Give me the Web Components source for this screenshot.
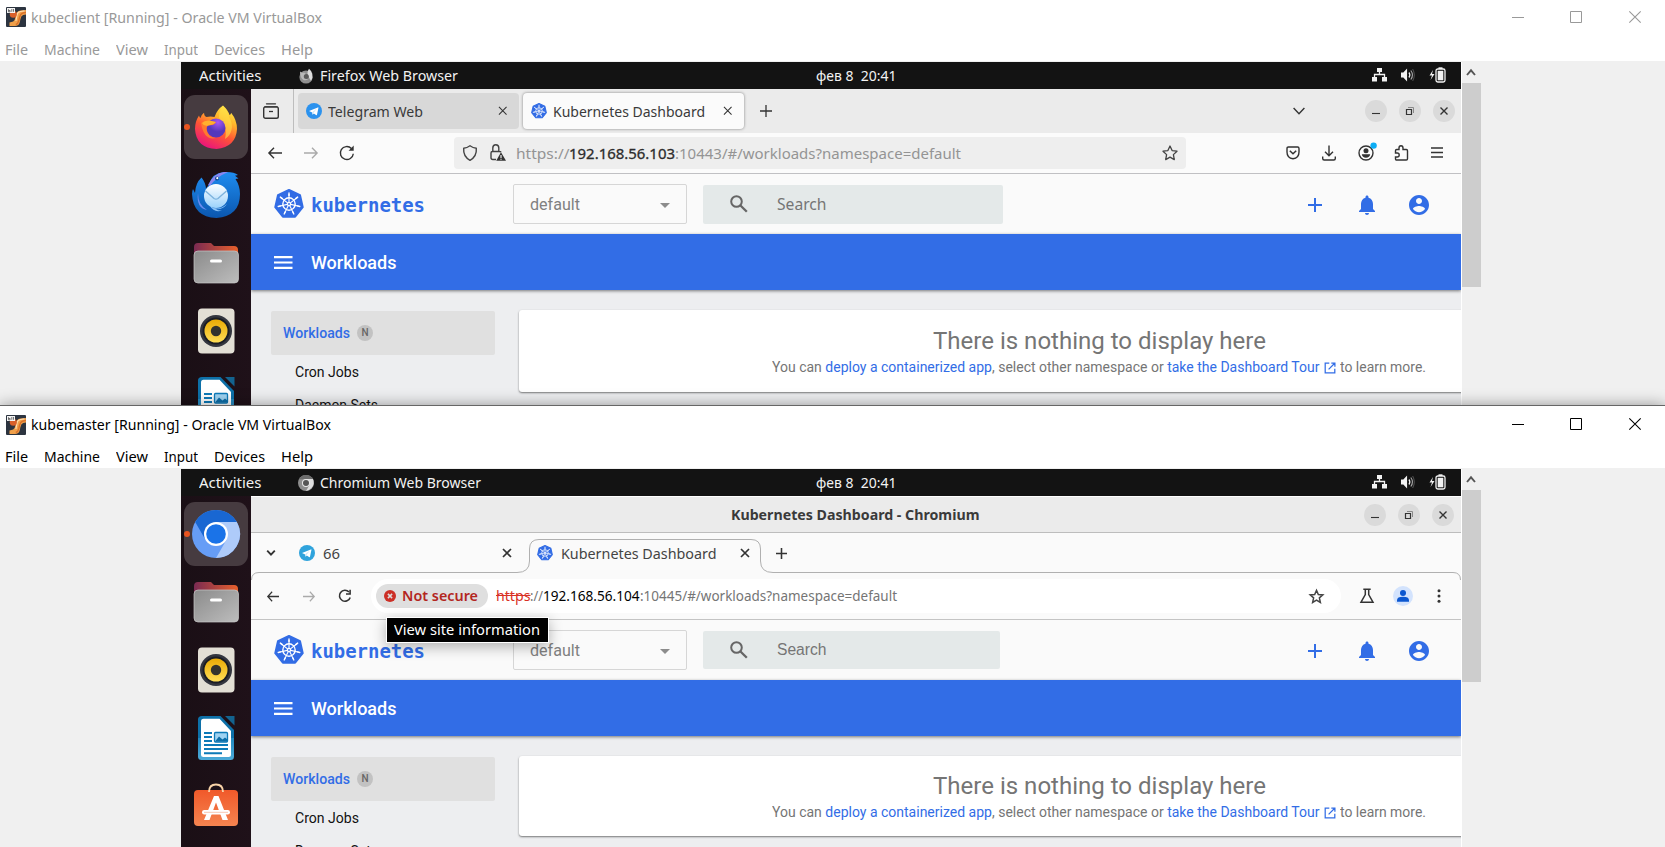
<!DOCTYPE html>
<html lang="en">
<head>
<meta charset="utf-8">
<title>Oracle VM VirtualBox</title>
<style>
html,body{margin:0;padding:0;height:847px;overflow:hidden;background:#f0f0f0}
body{display:flex;flex-direction:column;font-family:"Noto Sans","Open Sans",sans-serif}
</style>
</head>
<body>
<vm-window name="kubeclient" title-width="291" style="--h:405px;--title:34px;--menu:27px;--ink:#999;--thumb:204px;--deco:#999">
  <firefox-desktop></firefox-desktop>
</vm-window>
<vm-window name="kubemaster" title-width="300" active style="--h:441px;--title:37px;--menu:25px;--ink:#000;--thumb:192px;--deco:#000">
  <chromium-desktop></chromium-desktop>
</vm-window>

<script>
const poly=(n,r,cx,cy,rot=-90)=>Array.from({length:n},(_,i)=>{const a=(rot+i*360/n)*Math.PI/180;return (cx+r*Math.cos(a)).toFixed(2)+','+(cy+r*Math.sin(a)).toFixed(2)}).join(' ');
const spokes=Array.from({length:7},(_,i)=>`<g transform="rotate(${i*360/7} 16 16)"><path d="M16 14V5.2" stroke="#fff" stroke-width="1.2"/><path d="M16 4.2v2.6" stroke="#fff" stroke-width="1.5" stroke-linecap="round"/></g>`).join('');

const ICONS={
 vbox:['0 0 20 20',`<rect width="20" height="20" rx="1" fill="#2c3440"/><path d="M20 3v4.500q-3.500 0-4.500 1.700-1 2-1.600 5.500-.9 4.300-5 4.300H3.500v-3.500l3.700-1q1.600-.6 2-3.500L9.700 8Q10.500 4 14.500 3.400Z" fill="#f0a04a"/><path d="M20 5.500q-4 .3-5.300 2.200-1.200 2-1.900 6-.6 3-3 3.800" stroke="#d9702a" stroke-width="1.400" fill="none"/><path d="M18.500 3.900l-4 .6q-3 .6-3.500 3.500l-1.100 6" stroke="#ffdcae" stroke-width="1.200" fill="none"/><circle cx="7.300" cy="7.200" r="3.500" fill="#d9602a"/><rect x="1" y="1" width="8" height="5" fill="#f4f4f4"/><path d="M2.500 2.200v2.600h1.600V3.500H2.500M5.800 2v2.800M7.500 2v2.800" stroke="#555" stroke-width=".8" fill="none"/>`],
 k8s:['0 0 32 32',`<polygon points="${poly(7,15,16,16)}" fill="#326ce5" stroke="#326ce5" stroke-width="2.200" stroke-linejoin="round"/><circle cx="16" cy="16" r="6.600" fill="none" stroke="#fff" stroke-width="1.500"/>${spokes}<circle cx="16" cy="16" r="2.400" fill="#fff"/><circle cx="16" cy="16" r="1" fill="#326ce5"/>`],
 telegram:['0 0 16 16',`<circle cx="8" cy="8" r="8" fill="var(--tg,#2b92ee)"/><path d="M3 7.900l8.800-3.500q.8-.2.600.7l-1.400 6.700q-.2.800-1 .3L7.800 10.500l-1.300 1.200-.3-2.100Z" fill="#fff"/><path d="M6.200 9.500l4.500-3.800-3.500 4.400Z" fill="#b9dcf5"/>`],
 min:['0 0 12 12','<path d="M0 6.500h12" stroke="var(--deco)"/>'],
 max:['0 0 12 12','<path d="M.5.5h11v11H.5z" stroke="var(--deco)" fill="none"/>'],
 close:['0 0 12 12','<path d="M.3.300l11.400 11.400M11.700.3L.3 11.700" stroke="var(--deco)" stroke-width="1.100"/>'],
 up:['0 0 10 8','<path d="M1 7l4-4.700L9 7" fill="none" stroke="#555" stroke-width="1.900"/>'],
 ffgrey:['0 0 16 16',`<circle cx="8" cy="9" r="6.600" fill="#8f8f8f"/><path d="M11 .8q2.500 2 3.300 5 .8 4-1.300 7Q10 9 9.500 5.500 9.600 2.500 11 .8Z" fill="#ddd"/><path d="M2 3.500l2 1.200h2.500L9 7 6.500 8.500Q8 11.500 11 10 9 13 5.500 12 2 10 2 3.500Z" fill="#b8b8b8"/><circle cx="8.300" cy="8.600" r="2.500" fill="#5a5a5a"/>`],
 crgrey:['0 0 16 16',`<circle cx="8" cy="8" r="8" fill="#8e8e8e"/><path d="M8 4h7q2 5-1.500 9-2.500 2.500-5.500 2.900L11.500 10Z" fill="#ddd"/><path d="M1 4.200A8 8 0 0 1 15 4H8Z" fill="#6c6c6c"/><circle cx="8" cy="8" r="4" fill="#e9e9e9"/><circle cx="8" cy="8" r="3" fill="#555"/>`],
 net:['0 0 15 14','<path d="M5 0h5v4H5zM0 9h5v4.500H0zM10 9h5v4.500h-5z" fill="#f2f2f2"/><path d="M7.500 4v2.500M2.500 9V6.500h10V9" fill="none" stroke="#f2f2f2" stroke-width="1.300"/>'],
 vol:['0 0 15 14','<path d="M0 4.500h2.500L6.500.5v13l-4-4H0z" fill="#f2f2f2"/><path d="M8.500 4.500q2 2.500 0 5" stroke="#f2f2f2" stroke-width="1.300" fill="none"/><path d="M10.500 2.500q3.500 4.500 0 9" stroke="#aaa" stroke-width="1.200" fill="none"/><path d="M12.500 1q3.500 6 0 12" stroke="#555" stroke-width="1" fill="none"/>'],
 bat:['0 0 17 16','<path d="M4 3L.5 8.500H3L1.500 13 5.500 7H3z" fill="#f2f2f2"/><rect x="7" y="2" width="9" height="13" rx="1.800" fill="none" stroke="#f2f2f2" stroke-width="1.300"/><path d="M9.500.3h4v1.700h-4z" fill="#f2f2f2"/><rect x="8.700" y="3.800" width="5.600" height="9.500" fill="#f2f2f2"/>'],
 view:['0 0 16 16','<path d="M3.500.8h9M1.800 3.800h12.400" stroke="#333" stroke-width="1.300" stroke-linecap="round"/><rect x=".7" y="3.900" width="14.600" height="11.300" rx="1.800" fill="none" stroke="#333" stroke-width="1.400"/><path d="M6 8.500h4" stroke="#333" stroke-width="1.300"/>'],
 x:['0 0 10 10','<path d="M1 1l8 8M9 1L1 9" stroke="#333" stroke-width="var(--xw,1.100)"/>'],
 plus:['0 0 12 12','<path d="M6 0v12M0 6h12" stroke="#333" stroke-width="var(--xw,1.300)"/>'],
 chev:['0 0 12 8','<path d="M.6 1L6 6.700 11.400 1" stroke="#333" stroke-width="1.400" fill="none"/>'],
 chevb:['0 0 10 8','<path d="M1.200 1.700L5 5.600l3.800-3.900" stroke="#333" stroke-width="1.900" fill="none"/>'],
 back:['0 0 14 12','<path d="M14 6H1M6 .8L.9 6 6 11.200" stroke="#333" stroke-width="1.400" fill="none"/>'],
 fwd:['0 0 14 12','<path d="M0 6h13M8 .8L13.100 6 8 11.200" stroke="#aaa" stroke-width="1.400" fill="none"/>'],
 reload:['0 0 16 16','<path d="M14.300 8.700A6.500 6.500 0 1 1 12.400 3.400" stroke="#333" stroke-width="1.400" fill="none"/><path d="M14.700.6v5.100H9.600Z" fill="#333"/>'],
 creload:['0 0 14 14','<path d="M12.200 8.400A5.500 5.500 0 1 1 11 3" stroke="#333" stroke-width="1.600" fill="none"/><path d="M12.900.8v5H8V4.200h3.300V.8z" fill="#333"/>'],
 shield:['0 0 16 16','<path d="M8 .8q3 2.200 6.300 2.500Q15 11.500 8 15.300 1 11.500 1.700 3.300 5 3 8 .8Z" stroke="#444" stroke-width="1.400" fill="none" stroke-linejoin="round"/>'],
 lock:['0 0 16 17','<path d="M6 15.500H2.800Q1 15.500 1 13.700V9Q1 7.500 2.500 7.500h7q1.200 0 1.500.8M2.800 7.500V4q0-3.200 3-3.200t3 3.200v3.500" stroke="#444" stroke-width="1.400" fill="none"/><path d="M11 8.300l5 8.500H6.200z" fill="#333"/><path d="M11 11v3M11 14.800v1" stroke="#fff" stroke-width="1.100"/>'],
 star:['0 0 16 16',`<path d="M8 1l2.100 4.600 4.900.6-3.600 3.400.9 5L8 12.100l-4.300 2.500.9-5L1 6.200l4.900-.6Z" stroke="#444" stroke-width="1.300" fill="none" stroke-linejoin="round"/>`],
 cstar:['0 0 14 14',`<path d="M7 1.200l1.700 3.900 4.200.4-3.200 2.800.9 4.200L7 10.300l-3.600 2.200.9-4.200L1.100 5.500l4.200-.4Z" stroke="#444" stroke-width="1.400" fill="none"/>`],
 pocket:['0 0 14 14','<path d="M2.400 1h9.200Q13 1 13 2.400V6q0 6-6 6.800Q1 12 1 6V2.400Q1 1 2.400 1Z" stroke="#333" stroke-width="1.400" fill="none"/><path d="M3.800 4.700L7 7.800l3.200-3.100" stroke="#333" stroke-width="1.500" fill="none"/>'],
 dl:['0 0 14 16','<path d="M7 .5v10M3 6.800l4 4 4-4M.7 11.500v2q0 1.500 1.500 1.500h9.600q1.500 0 1.500-1.500v-2" stroke="#333" stroke-width="1.400" fill="none"/>'],
 acct:['0 0 20 20','<circle cx="9" cy="11" r="7" stroke="#333" stroke-width="1.400" fill="none"/><circle cx="9" cy="8.800" r="2.500" fill="#333"/><path d="M4.800 12.200h8.400q-.5 3.400-4.200 3.600-3.700-.2-4.200-3.600Z" fill="#333"/><circle cx="16.600" cy="3.600" r="3.200" fill="#0cadf5"/>'],
 puzzle:['0 0 16 16','<path d="M5 4.500V3q0-2.300 2-2.300T9 3v1.500h3.300q1.200 0 1.200 1.200v8.100q0 1.200-1.200 1.200H2.700q-1.200 0-1.200-1.200V12h1.700q2 0 2-2t-2-2H1.500V5.700q0-1.200 1.200-1.200Z" stroke="#333" stroke-width="1.400" fill="none"/>'],
 ham:['0 0 12 11','<path d="M0 1h12M0 5.500h12M0 10h12" stroke="#333" stroke-width="1.300"/>'],
 mag:['0 0 18 18','<circle cx="6.500" cy="6.500" r="5.300" stroke="#666" stroke-width="2" fill="none"/><path d="M10.500 10.500l6.300 6.300" stroke="#666" stroke-width="2.300"/>'],
 drop:['0 0 10 5','<path d="M0 0h10L5 5z" fill="#8c8c8c"/>'],
 add:['0 0 14 14','<path d="M7 0v14M0 7h14" stroke="#326de6" stroke-width="2"/>'],
 bell:['0 0 24 24','<path d="M12 22c1.100 0 2-.9 2-2h-4c0 1.100.9 2 2 2zm6-6v-5c0-3.070-1.640-5.640-4.500-6.320V4c0-.83-.67-1.500-1.500-1.500s-1.500.67-1.500 1.500v.68C7.630 5.360 6 7.920 6 11v5l-2 2v1h16v-1l-2-2z" fill="#326de6"/>'],
 user:['0 0 24 24','<path d="M12 2C6.480 2 2 6.480 2 12s4.480 10 10 10 10-4.480 10-10S17.520 2 12 2zm0 3c1.660 0 3 1.340 3 3s-1.340 3-3 3-3-1.340-3-3 1.340-3 3-3zm0 14.200c-2.500 0-4.710-1.280-6-3.220.030-1.990 4-3.080 6-3.080 1.990 0 5.970 1.090 6 3.080-1.290 1.940-3.500 3.220-6 3.220z" fill="#326de6"/>'],
 burger:['0 0 18 12','<path d="M0 1h18M0 6h18M0 11h18" stroke="#fff" stroke-width="2"/>'],
 ext:['0 0 12 12','<path d="M5.300 1.200H1.200v9.600h9.600V6.700M7.300 1.100h3.600v3.600M10.700 1.300L4.600 7.400" stroke="#326de6" stroke-width="1.250" fill="none"/>'],
 bad:['0 0 12 12','<circle cx="6" cy="6" r="6" fill="#cc2f26"/><path d="M3.900 3.900l4.200 4.200M8.100 3.900L3.900 8.100" stroke="#ddd" stroke-width="1.500"/>'],
 flask:['0 0 14 16','<path d="M3.300 1.200h7.400M5.300 1v5.600L1 14.200h12L8.700 6.600V1" stroke="#333" stroke-width="1.500" fill="none"/>'],
 prof:['0 0 20 20','<circle cx="10" cy="10" r="10" fill="#d3e3fd"/><circle cx="10" cy="7" r="3" fill="#0b57d0"/><path d="M4 15.800v-1.600q0-3.400 6-3.400t6 3.400v1.600z" fill="#0b57d0"/>'],
 kebab:['0 0 4 14','<circle cx="2" cy="1.700" r="1.500" fill="#333"/><circle cx="2" cy="7" r="1.500" fill="#333"/><circle cx="2" cy="12.300" r="1.500" fill="#333"/>'],
 wmin:['0 0 22 22','<circle cx="11" cy="11" r="11" fill="#dadada"/><path d="M7 13.500h8" stroke="#333" stroke-width="1.100"/>'],
 wmax:['0 0 22 22','<circle cx="11" cy="11" r="11" fill="#dadada"/><path d="M7.500 9.500h5v5h-5z" stroke="#333" fill="none" stroke-width="1.200"/><path d="M9 7.500h5.500V13" stroke="#888" fill="none"/>'],
 wx:['0 0 22 22','<circle cx="11" cy="11" r="11" fill="#dadada"/><path d="M7.500 7.500l7 7M14.500 7.500l-7 7" stroke="#333" stroke-width="1.400"/>'],
 firefox:['0 0 48 48',`<defs><linearGradient id="a" x1=".8" y1="0" x2=".3" y2="1"><stop offset="0" stop-color="#fff04a"/><stop offset=".3" stop-color="#ffb52a"/><stop offset=".6" stop-color="#ff5634"/><stop offset="1" stop-color="#e8127f"/></linearGradient><radialGradient id="b" cx=".6" cy=".2"><stop offset="0" stop-color="#a856f5"/><stop offset="1" stop-color="#5538bb"/></radialGradient></defs><path d="M31 2.500q5 4.500 6.500 9.500 1.500-.3 1.600-2.300Q45 17 45 26q-1 18-20.500 20Q4 45 3 26q0-7.500 4-13.500.5 2 1.500 2.500 1-3.500 3.500-5.200.3 3.700 2.500 4.200 4-1 8 0 2.500-7.500 8.500-11.500Z" fill="url(#a)"/><path d="M31 3q5 5 6 11 4 6 2.500 13-1.500 6-6.500 9 2-9-1-15-4-4-5-6.500Q27 7 31 3Z" fill="#ffe04a" opacity=".6"/><circle cx="24" cy="25" r="9.500" fill="url(#b)"/><path d="M9 20q5-4 9.500-1.500l5.500.5q-2 3.500-6 3.300-4 .2-3.500 4.200 1.500 8 9.500 8.500Q12 38 9 20Z" fill="#ff7a2e"/><path d="M10 20q4-4.500 14-1-3 3.500-7 3.300Q12 24 10 20Z" fill="#ffb02e"/>`],
 thunder:['0 0 48 48',`<defs><linearGradient id="a" x1="0" y1="0" x2="0" y2="1"><stop offset="0" stop-color="#1f8df0"/><stop offset="1" stop-color="#0b56ae"/></linearGradient><linearGradient id="b" x1="0" y1="0" x2="0" y2="1"><stop offset="0" stop-color="#fff"/><stop offset="1" stop-color="#9bd2fb"/></linearGradient></defs><path d="M9.500 6.500q4 5 4.500 11l3-4Q20 2 32 1q10-.5 14 3l-3 .8 3.500 2.700-3 .5Q48 15 48 23q0 22-23.500 24Q1 46 0 23q0-3 1-5l2 4Q3.500 12 9.500 6.500Z" fill="url(#a)"/><path d="M6 22q0 12 9 17Q4 37 6 22Z" fill="#6c8cf0"/><path d="M16 14Q22 2 32 1h4Q24 6 18 15Z" fill="#8a86f0"/><circle cx="25" cy="7.500" r="1.900" fill="#0a3f86"/><circle cx="25.300" cy="7.200" r="1.100" fill="#fff"/><circle cx="24" cy="25" r="12" fill="url(#b)"/><path d="M18 35q8 6 17-2-4 6-11 5 2 2 6 1.500Q22 42 18 35Z" fill="#8cc4f8"/><path d="M13.500 20l8.500 7.500q2 1.300 4 0l8.500-7.500" stroke="#7cb2dd" stroke-width="1.400" fill="none"/>`],
 files:['0 0 48 48',`<defs><linearGradient id="a"><stop offset="0" stop-color="#7a2a52"/><stop offset="1" stop-color="#e8602c"/></linearGradient><linearGradient id="b" x1="0" y1="0" x2="1" y2="1"><stop offset="0" stop-color="#8b8b8b"/><stop offset="1" stop-color="#bdbdbd"/></linearGradient></defs><path d="M2 8q0-4 4-4h13l3 3h20q4 0 4 4v10H2Z" fill="url(#a)"/><rect x="2" y="12" width="44.500" height="32" rx="4" fill="url(#b)" stroke="#c8c8c8" stroke-width=".7"/><rect x="18" y="20.500" width="12" height="3" rx="1.500" fill="#fff"/>`],
 rhythm:['0 0 48 48',`<defs><linearGradient id="a" x1="0" y1="0" x2="0" y2="1"><stop offset="0" stop-color="#e9aa05"/><stop offset="1" stop-color="#ffdd55"/></linearGradient></defs><rect x="6" y="1.500" width="36.500" height="45" rx="4" fill="#e3dfd5"/><circle cx="24" cy="24" r="16" fill="#34363f"/><circle cx="24" cy="24" r="13.500" fill="#1b1d24"/><circle cx="24" cy="24" r="11.500" fill="url(#a)"/><circle cx="24" cy="24" r="5.200" fill="#33332e"/>`],
 writer:['0 0 48 48',`<defs><linearGradient id="a" x1="0" y1="0" x2="0" y2="1"><stop offset="0" stop-color="#0d70a8"/><stop offset=".5" stop-color="#0d70a8"/><stop offset=".51" stop-color="#2288bf"/><stop offset="1" stop-color="#4caad8"/></linearGradient></defs><path d="M10 2h18.500L42 16v26.500q0 3.500-3.500 3.500H9.500Q6 46 6 42.500V5.500Q6 2 10 2Z" fill="url(#a)"/><path d="M33 2h9.500v9.500Z" fill="#13638f"/><path d="M11.500 4.800H27.500L39 17v23.500q0 2.500-2.500 2.500h-25Q9 43 9 40.500v-33q0-2.700 2.500-2.700Z" fill="#fff"/><path d="M12 19h8M12 23h8M12 27h8M12 31h24M12 35h24M12 39.300h18" stroke="#0d7ab8" stroke-width="2"/><rect x="22.500" y="18.500" width="13" height="9.500" rx="1" fill="#9fd3f2" stroke="#0d7ab8" stroke-width="1.300"/><path d="M23 27.500l4-5 3.500 3 2.500-2 2.500 2v2Z" fill="#0d6ea8"/>`],
 soft:['0 0 48 48',`<defs><linearGradient id="a" x1="0" y1="0" x2="0" y2="1"><stop offset="0" stop-color="#f0592a"/><stop offset="1" stop-color="#f58450"/></linearGradient></defs><rect x="2" y="8" width="44" height="36" rx="4" fill="url(#a)"/><path d="M17 10q0-7.500 7-7.500t7 7.500" stroke="#f8d3a8" stroke-width="1.800" fill="none"/><path d="M22 14h4.500l9.500 24h-5.500L24 20.500 17.500 38H12Z" fill="#fff"/><rect x="10" y="28" width="28" height="4.500" rx="2.200" fill="#fff"/><path d="M12 30.300h24" stroke="#f0a080" stroke-width=".6"/>`],
 chromium:['0 0 48 48',`<circle cx="24" cy="24" r="24" fill="#669df6"/><path d="M24 12h20.800A24 24 0 0 1 24 48L34.400 30Z" fill="#aecbfa"/><path d="M3.200 12A24 24 0 0 1 44.800 12H24L13.600 30Z" fill="#1967d2"/><circle cx="24" cy="24" r="12" fill="#fff"/><circle cx="24" cy="24" r="9.800" fill="#1a73e8"/>`]
};

const define=(tag,css,html)=>customElements.define(tag,class extends HTMLElement{
  connectedCallback(){ if(this.shadowRoot)return;
    const t=document.createElement('template');
    t.innerHTML=`<style>*{box-sizing:border-box}${css}</style>`+(typeof html==='function'?html(this):html);
    this.attachShadow({mode:'open'}).appendChild(t.content.cloneNode(true)); }
});

/* n = icon name, w/h = drawn size in px */
define('ui-icon',':host{display:block;flex:none}svg{display:block;width:100%;height:100%;overflow:visible}',el=>{
  const [vb,body]=ICONS[el.getAttribute('n')];
  el.style.width=el.getAttribute('w')+'px'; el.style.height=(el.getAttribute('h')||el.getAttribute('w'))+'px';
  return `<svg viewBox="${vb}" preserveAspectRatio="none">${body}</svg>`;});

define('vm-window',`
:host{display:flex;flex-direction:column;flex:none;position:relative;height:var(--h);background:#fff}
:host([active]){border-top:1px solid #666;height:calc(var(--h) + 1px);box-shadow:0 0 14px rgba(0,0,0,.38);z-index:1}
.title{height:var(--title);display:flex;align-items:center;padding-left:6px;font-size:15px;color:var(--ink)}
.title fit-text{margin:0 0 1px 5px}
:host([active]) .title fit-text{margin-bottom:2px}
.ctl{margin-left:auto;display:flex;gap:46px 46px;padding-right:24px;align-items:center;margin-top:-1px}
:host([active]) .ctl{margin-top:-2px}
.ctl ui-icon:last-child{margin-left:1px}
.menu{height:var(--menu);display:flex;gap:16px;padding-left:5px;align-items:center;font-size:14.500px;color:var(--ink)}
.menu fit-text{margin-top:3px}
:host([active]) .menu fit-text{margin-top:1px}
.stage{flex:1;min-height:0;background:#f0f0f0;display:flex;padding:1px 0 0 181px;overflow:hidden}
.screen{width:1280px;flex:none;overflow:hidden}
.sb{width:20px;margin-left:0;border-left:1px solid #fff;background:#f0f0f0;display:flex;flex-direction:column}
.sb ui-icon{margin:6px auto 7px 4px}.thumb{height:var(--thumb);background:#cdcdcd}`,
el=>`<div class="title"><ui-icon n="vbox" w="20"></ui-icon><fit-text w="${el.getAttribute('title-width')}">${el.getAttribute('name')} [Running] - Oracle VM VirtualBox</fit-text>
<div class="ctl"><ui-icon n="min" w="12"></ui-icon><ui-icon n="max" w="12"></ui-icon><ui-icon n="close" w="12"></ui-icon></div></div>
<div class="menu"><fit-text w="23">File</fit-text><fit-text w="56">Machine</fit-text><fit-text w="32">View</fit-text><fit-text w="34">Input</fit-text><fit-text w="51">Devices</fit-text><fit-text w="32">Help</fit-text></div>
<div class="stage"><div class="screen"><slot></slot></div><div class="sb"><ui-icon n="up" w="10" h="8"></ui-icon><div class="thumb"></div></div></div>`);

define('gnome-bar',`
:host{display:grid;grid-template-columns:117px 518px 1fr auto;align-items:center;height:27px;background:#131313;color:#f2f2f2;font-size:14.300px}
fit-text{margin-bottom:1px}
.act{padding-left:18px}.app{display:flex;align-items:center;gap:6px}
.tray{display:flex;gap:14px;padding-right:15px;align-items:center;margin-bottom:1px}`,
el=>`<div class="act"><fit-text w="62.500">Activities</fit-text></div>
<div class="app"><ui-icon n="${el.getAttribute('icon')}" w="16"></ui-icon><fit-text w="${el.getAttribute('w')}">${el.getAttribute('app')}</fit-text></div>
<fit-text w="80.500">фев 8&nbsp; 20:41</fit-text>
<div class="tray"><ui-icon n="net" w="15" h="14"></ui-icon><ui-icon n="vol" w="14" h="14"></ui-icon><ui-icon n="bat" w="17" h="16"></ui-icon></div>`);

define('gnome-dock',`
:host{display:flex;flex-direction:column;gap:4px;width:70px;flex:none;padding:6px 3px;background:linear-gradient(90deg,#1a0f15,#1f1119)}
.cell{width:64px;height:64px;flex:none;display:grid;place-items:center;border-radius:11px;position:relative}
.cell.on{background:#463b40}
.cell.on::before{content:"";position:absolute;left:0;top:29px;width:6px;height:6px;border-radius:50%;background:#e95420}`,
el=>el.getAttribute('apps').split(' ').map((a,i)=>`<div class="cell${i?'':' on'}"><ui-icon n="${a}" w="48"></ui-icon></div>`).join(''));

/* Kubernetes Dashboard page */
define('kube-page',`
:host{display:block;background:#edeef0;font-family:Roboto,sans-serif;height:400px}
.head{height:60px;background:#fafafa;display:flex;align-items:center;padding-left:23px}
.word{margin:1px 0 0 7px;font:bold 19px "DejaVu Sans Mono",monospace;color:#326de6}
.sel{margin-left:88px;width:174px;height:40px;border:1px solid #d6d6d6;border-radius:2px;display:flex;align-items:center;padding:0 16px;font-size:16px;color:#808080;justify-content:space-between}
.sel ui-icon{margin-top:2px}
.search{margin-left:16px;width:var(--sw);height:var(--sh);background:#e4e9e9;border-radius:2px;display:flex;align-items:center;padding-left:27px;font:var(--sf);color:#757575}
.search ui-icon{margin-bottom:1px}
.search fit-text{margin-left:29px}
.acts{margin:1px 0 0 auto;display:flex;align-items:center;padding-right:30px}
.blue{height:56px;background:#326de6;display:flex;align-items:center;padding-left:23px;color:#fff;font-size:18px;font-weight:500;box-shadow:0 1px 3px rgba(0,0,0,.5);position:relative}
.blue fit-text{margin-left:18.500px}
.body{display:grid;grid-template-columns:224px 1160px;gap:24px;padding:20px 0 0 20px}
.item{margin-top:1px;height:44px;background:#e0e0e0;border-radius:2px;display:flex;align-items:center;padding-left:12px;font-size:14px;font-weight:500;color:#326de6}
.n{margin-left:7px;width:16px;height:16px;border-radius:50%;background:#c2c2c2;color:#666;font-size:10px;line-height:16px;text-align:center}
.sub{height:33px;display:flex;align-items:center;padding-left:24px;font-size:14px;color:#111}
.card{height:var(--ch,82px);background:#fff;border-radius:3px;box-shadow:0 1px 2px rgba(0,0,0,.5);color:#757575;display:flex;flex-direction:column;align-items:center;padding-top:var(--cp,17px)}
.card .t{font-size:24px;line-height:28px}.card .s{font-size:14px;line-height:20px;margin-top:2px;display:flex;align-items:center;white-space:pre}
.s b{font-weight:400;color:#326de6}`,
`<div class="head"><ui-icon n="k8s" w="30"></ui-icon><fit-text class="word" w="114">kubernetes</fit-text>
<div class="sel"><fit-text w="50">default</fit-text><ui-icon n="drop" w="10" h="5"></ui-icon></div>
<div class="search"><ui-icon n="mag" w="18"></ui-icon><fit-text w="49.500">Search</fit-text></div>
<div class="acts"><ui-icon n="add" w="14"></ui-icon><ui-icon n="bell" w="24" style="margin-left:33px"></ui-icon><ui-icon n="user" w="24" style="margin-left:28px"></ui-icon></div></div>
<div class="blue"><ui-icon n="burger" w="18.500" h="13"></ui-icon><fit-text w="85.500">Workloads</fit-text></div>
<div class="body"><div><div class="item"><fit-text w="67">Workloads</fit-text><span class="n">N</span></div>
<div class="sub"><fit-text w="64">Cron Jobs</fit-text></div><div class="sub"><fit-text w="83">Daemon Sets</fit-text></div></div>
<div class="card"><fit-text class="t" w="333">There is nothing to display here</fit-text>
<div class="s"><fit-text w="547.500">You can <b>deploy a containerized app</b>, select other namespace or <b>take the Dashboard Tour</b></fit-text><ui-icon n="ext" w="12" style="margin:1px 4px 0 4.500px"></ui-icon><fit-text w="86">to learn more.</fit-text></div></div></div>`);

define('firefox-desktop',`
:host{display:block}.row{display:flex;height:420px}.win{flex:1;min-width:0;overflow:hidden;background:#fbfbfb}
.tabs{height:44px;background:#ebebeb;display:flex;align-items:center;padding-left:12px;font-size:14.500px;color:#3a3a3a}
.sep{width:1px;height:44px;background:#bdbdbd;margin:0 4px 0 14px}
.tab{width:221px;height:36px;border-radius:4px;background:#d8d8d8;display:flex;align-items:center;padding:0 12px 0 8px;gap:6px}
.tab.on{background:#fbfbfb;box-shadow:0 0 3px rgba(0,0,0,.45);margin-left:4px}.tab ui-icon:last-child{margin-left:auto}
.btns{display:flex;gap:12px;margin-left:auto;padding-right:6px}
.nav{height:41px;border-bottom:1px solid #c0c0c3;display:flex;align-items:center;padding-left:17px}
.url{margin-left:99px;width:732px;height:32px;border-radius:4px;background:#eee;display:flex;align-items:center;padding:0 8px;font-size:14.700px;color:#949494}
.d{color:#2c2c2c;-webkit-text-stroke:.3px #2c2c2c}
.tools{display:flex;align-items:center;margin-left:auto;padding-right:18px}
kube-page{--sw:300px;--sh:39px;--sf:400 15.700px "Noto Sans",sans-serif}`,
`<gnome-bar app="Firefox Web Browser" icon="ffgrey" w="138"></gnome-bar>
<div class="row"><gnome-dock apps="firefox thunder files rhythm writer"></gnome-dock>
<div class="win"><div class="tabs"><ui-icon n="view" w="16"></ui-icon><div class="sep"></div>
<div class="tab"><ui-icon n="telegram" w="16"></ui-icon><fit-text w="95">Telegram Web</fit-text><ui-icon n="x" w="9.500"></ui-icon></div>
<div class="tab on"><ui-icon n="k8s" w="16"></ui-icon><fit-text w="152">Kubernetes Dashboard</fit-text><ui-icon n="x" w="9.500"></ui-icon></div>
<ui-icon n="plus" w="12" style="margin-left:15.500px"></ui-icon><ui-icon n="chev" w="12" h="8" style="margin-left:521.500px"></ui-icon>
<div class="btns"><ui-icon n="wmin" w="22"></ui-icon><ui-icon n="wmax" w="22"></ui-icon><ui-icon n="wx" w="22"></ui-icon></div></div>
<div class="nav"><ui-icon n="back" w="14" h="12"></ui-icon><ui-icon n="fwd" w="14" h="12" style="margin-left:22px"></ui-icon><ui-icon n="reload" w="16" style="margin-left:21px"></ui-icon>
<div class="url"><ui-icon n="shield" w="16"></ui-icon><ui-icon n="lock" w="16" h="17" style="margin:-1px 0 0 12px"></ui-icon>
<fit-text w="53.500" style="margin-left:9.500px">https://</fit-text><fit-text class="d" w="106">192.168.56.103</fit-text><fit-text w="286">:10443/#/workloads?namespace=default</fit-text>
<ui-icon n="star" w="16" style="margin-left:auto"></ui-icon></div>
<div class="tools"><ui-icon n="pocket" w="14"></ui-icon><ui-icon n="dl" w="14" h="16" style="margin:-1px 0 0 21.500px"></ui-icon><ui-icon n="acct" w="20" style="margin:-2px 0 0 21px"></ui-icon><ui-icon n="puzzle" w="16" style="margin-left:17px"></ui-icon><ui-icon n="ham" w="12" h="11" style="margin:-1px 0 0 21.500px"></ui-icon></div></div>
<kube-page></kube-page></div></div>`);

define('chromium-desktop',`
:host{display:block}.row{display:flex;height:420px}.win{flex:1;min-width:0;overflow:hidden;background:#fafafa;position:relative}
.bar{height:37px;border-top:1px solid #fff;border-bottom:1px solid #bdbdbd;background:#ebebeb;display:flex;align-items:center;padding:0 7px 0 480px;font-size:14.300px;font-weight:700;color:#3a3a3a}
.btns{display:flex;gap:12px;margin-left:auto}
.tabs{height:40px;display:flex;align-items:center;padding-left:15px;font-size:14.500px;color:#444;position:relative;--xw:1.700;--tg:#2fa3dc}
.tabs fit-text,.omni fit-text{margin-bottom:1px}
.line{position:absolute;left:0;top:0;width:1210px;height:50px;pointer-events:none}
.nav{height:47px;border-bottom:1px solid #c4c4c4;display:flex;align-items:center;padding-left:16px}
.omni{margin-left:19px;width:970px;height:34px;border-radius:17px;background:#fff;display:flex;align-items:center;padding:0 17px 0 5px;font-size:14.300px;color:#757575}
.chip{width:112px;height:24px;border-radius:12px;background:#dfdfdf;display:flex;align-items:center;padding-left:8px;gap:6px;color:#b3261e;font-weight:600;margin-right:7.500px}
.k{color:#000}.r{color:#d93025;text-decoration:line-through}
.tools{display:flex;align-items:center;margin-left:auto;padding-right:20px}
.tip{position:absolute;left:135px;top:121px;width:163px;height:26px;background:#000;border:1px solid #fff;box-shadow:0 4px 14px rgba(0,0,0,.3);color:#fff;display:flex;align-items:center;padding:0 0 2px 7px;font-size:14.300px}
kube-page{--sw:297px;--sh:38px;--sf:400 16px "Liberation Sans",sans-serif;--ch:80px;--cp:16px}`,
`<gnome-bar app="Chromium Web Browser" icon="crgrey" w="161"></gnome-bar>
<div class="row"><gnome-dock apps="chromium files rhythm writer soft"></gnome-dock>
<div class="win"><div class="bar"><fit-text w="248.500">Kubernetes Dashboard - Chromium</fit-text><div class="btns"><ui-icon n="wmin" w="22"></ui-icon><ui-icon n="wmax" w="22"></ui-icon><ui-icon n="wx" w="22"></ui-icon></div></div>
<div class="tabs"><svg class="line" viewBox="0 0 1210 50"><path d="M.5 47Q.5 39.500 8 39.500H266Q278.500 39.500 278.500 28V16Q278.500 6.500 288 6.500H500Q509.500 6.500 509.500 16V28Q509.500 39.500 522 39.500H1202Q1209.500 39.500 1209.500 47" fill="none" stroke="#b0b0b0"/></svg>
<ui-icon n="chevb" w="10" h="8"></ui-icon><ui-icon n="telegram" w="16" style="margin-left:23px"></ui-icon><fit-text w="17" style="margin-left:8px">66</fit-text>
<ui-icon n="x" w="10" style="margin-left:162px"></ui-icon><ui-icon n="k8s" w="16" style="margin-left:25px"></ui-icon><fit-text w="155.500" style="margin-left:8px">Kubernetes Dashboard</fit-text>
<ui-icon n="x" w="10" style="margin-left:23.500px"></ui-icon><ui-icon n="plus" w="11" style="margin-left:25.500px"></ui-icon></div>
<div class="nav"><ui-icon n="back" w="12" h="11"></ui-icon><ui-icon n="fwd" w="12" h="11" style="margin-left:24px"></ui-icon><ui-icon n="creload" w="14" style="margin-left:23px"></ui-icon>
<div class="omni"><div class="chip"><ui-icon n="bad" w="12"></ui-icon><fit-text w="76">Not secure</fit-text></div>
<fit-text class="r" w="34.500">https</fit-text><fit-text w="13">://</fit-text><fit-text class="k" w="96.500">192.168.56.104</fit-text><fit-text w="257">:10445/#/workloads?namespace=default</fit-text>
<ui-icon n="cstar" w="15" style="margin-left:auto"></ui-icon></div>
<div class="tools"><ui-icon n="flask" w="14" h="16"></ui-icon><ui-icon n="prof" w="20" style="margin-left:19px"></ui-icon><ui-icon n="kebab" w="4" h="14" style="margin-left:24px"></ui-icon></div></div>
<kube-page></kube-page>
<div class="tip"><fit-text w="146">View site information</fit-text></div></div></div>`);

/* Text run set to a given advance width */
customElements.define('fit-text',class extends HTMLElement{
  connectedCallback(){
    if(this.shadowRoot)return;
    const r=this.attachShadow({mode:'open'});
    r.innerHTML='<style>:host{display:block;flex:none;white-space:pre}span{display:inline-block;transform-origin:0 50%;text-decoration:inherit}</style><span><slot></slot></span>';
    const s=r.querySelector('span'),w=+this.getAttribute('w');
    const n=s.getBoundingClientRect().width;
    this.style.width=w+'px';
    s.style.transform=`scaleX(${w/n})`;
  }
});
</script>
</body>
</html>
